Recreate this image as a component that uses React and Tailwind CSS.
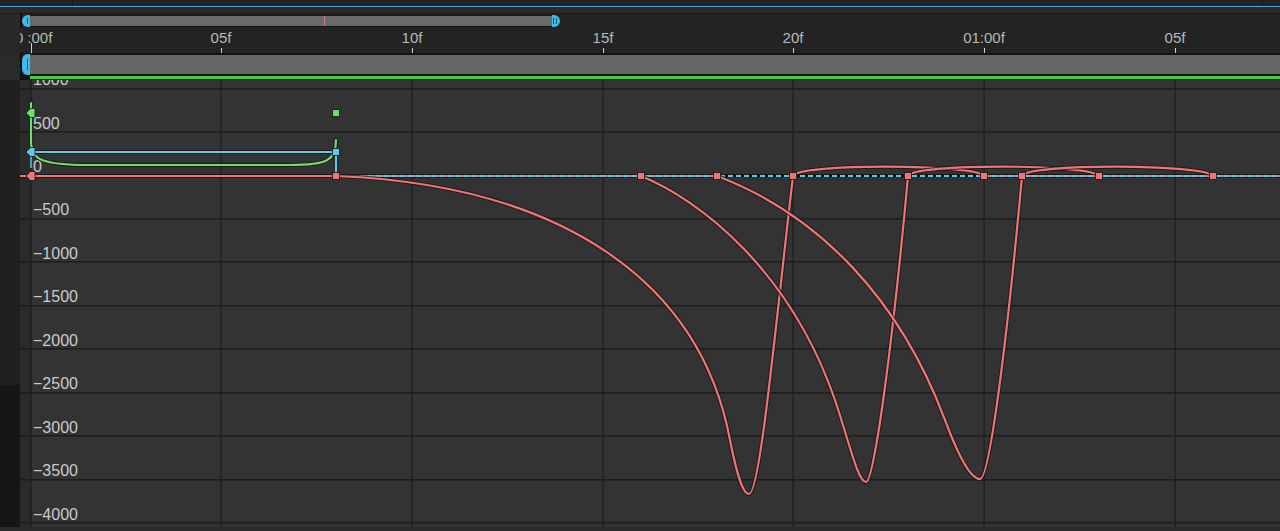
import React from 'react';

const RED = '#f07474';
const GREEN = '#6fdc6f';
const CYAN = '#62c8e6';
const OUTLINE = '#161616';

const ruler = [
  ['05f', 221],
  ['10f', 412],
  ['15f', 603],
  ['20f', 793],
  ['01:00f', 984],
  ['05f', 1175],
];

const values = ['1000', '500', '0', '−500', '−1000', '−1500', '−2000', '−2500', '−3000', '−3500', '−4000'];
const gridX = [31, 221, 412, 603, 793, 984, 1175];
const redKeys = [336, 641, 717, 793, 908, 984, 1022, 1099, 1213];

const redCurves = [
  'M336,176 C560,185 700,280 730,440 C736,470 742,494 749,494 C760,494 775,330 793,176',
  'M641,176 C700,200 790,270 835,400 C850,445 858,482 866,482 C875,482 895,320 908,176',
  'M717,176 C820,215 900,300 945,420 C958,455 970,479 980,479 C990,479 1008,330 1022,176',
  'M793,176 C797,163 978,164 984,176',
  'M908,176 C912,163 1093,164 1099,176',
  'M1022,176 C1026,163 1207,164 1213,176',
];

// curve with the dark outline the graph editor draws under it
const Curve = ({ d, color, w = 2.2, dash }) => (
  <g fill="none" strokeLinecap="round" strokeLinejoin="round">
    <path d={d} stroke={OUTLINE} strokeWidth={w + 2} strokeOpacity="0.8" />
    <path d={d} stroke={color} strokeWidth={w} strokeDasharray={dash} />
  </g>
);

const Square = ({ x, y, color }) => (
  <rect x={x - 3.5} y={y - 3.5} width="7" height="7" fill={color} stroke={OUTLINE} strokeWidth="0.8" />
);

const FirstKey = ({ y, color }) => (
  <polygon
    points={`26,${y} 30.5,${y - 4.5} 35,${y - 4.5} 35,${y + 4.5} 30.5,${y + 4.5}`}
    fill={color}
    stroke={OUTLINE}
    strokeWidth="0.8"
  />
);

const Handle = ({ side, h }) => (
  <div
    className={`w-[8px] ${h} bg-[#3fb9ea] flex items-center justify-center gap-[2px] ${
      side === 'left' ? 'rounded-l-[6px] pl-[2px]' : 'rounded-r-[6px] pr-[2px]'
    }`}
  >
    <div className="w-px h-[55%] bg-[#155a78]" />
    {side === 'right' && <div className="w-px h-[55%] bg-[#155a78]" />}
  </div>
);

const App = () => {
  return (
    <div className="w-[1280px] h-[531px] bg-[#262626] flex flex-col overflow-hidden font-['Liberation_Sans',Arial,sans-serif]">
      {/* panel header strip */}
      <div className="h-[6px] flex bg-[#232323]">
        <div className="w-[73px] border-r border-[#181818]" />
        <div className="flex-1 border-r border-[#181818]" />
        <div className="w-[17px]" />
      </div>
      <div className="h-px bg-[#4aa8dc]" />
      <div className="h-[7px] bg-[#2a2a2a] border-b border-[#1c1c1c]" />

      {/* navigator */}
      <div className="h-[14px] flex items-center bg-[#232323]">
        <div className="w-[20px] h-full bg-[#292929]" />
        <div className="w-[2px] h-full bg-[#111]" />
        <Handle side="left" h="h-[12px]" />
        <div className="w-[522px] h-[12px] bg-[#6a6a6a] border-y border-[#141414] relative">
          <div className="absolute left-[294px] top-0 bottom-0 w-px bg-[#c98080]" />
          <div className="absolute left-[295px] top-0 bottom-0 w-px bg-[#e23a3a]" />
        </div>
        <Handle side="right" h="h-[12px]" />
      </div>

      {/* time ruler */}
      <div className="h-[26px] flex">
        <div className="w-[20px] bg-[#282828]" />
        <svg width="1260" height="26" viewBox="20 28 1260 26" className="block">
          <rect x="20" y="28" width="1260" height="26" fill="#232323" />
          <rect x="20" y="53" width="1260" height="1" fill="#111" />
          <text x="15" y="43" fill="#b9b9b9" fontSize="15">
            <tspan>0</tspan>
            <tspan dx="4">:00f</tspan>
          </text>
          <rect x="31" y="43" width="1" height="10" fill="#d0d0d0" />
          {ruler.map(([label, x], i) => (
            <g key={i}>
              <text x={x} y="43" fill="#b9b9b9" fontSize="15" textAnchor="middle">
                {label}
              </text>
              <rect x={x} y="48" width="1" height="5" fill="#d0d0d0" />
            </g>
          ))}
        </svg>
      </div>

      {/* work area bar */}
      <div className="h-[21px] flex">
        <div className="w-[20px] bg-[#2a2a2a]" />
        <div className="w-[2px] bg-[#111]" />
        <Handle side="left" h="h-full" />
        <div className="flex-1 bg-[#666] border-y border-[#151515]" />
      </div>
      <div className="h-[5px] flex">
        <div className="w-[20px] bg-[#2a2a2a]" />
        <div className="flex-1 bg-[#141414] py-px pl-[10px]">
          <div className="h-[3px] bg-[#3fcf3f]" />
        </div>
      </div>

      {/* graph */}
      <div className="h-[447px] flex">
        <div className="w-[20px] flex flex-col">
          <div className="h-[305px] bg-[#202020]" />
          <div className="flex-1 bg-[#161616]" />
        </div>
        <svg width="1260" height="447" viewBox="20 80 1260 447" className="block">
          <rect x="20" y="80" width="11" height="447" fill="#2b2b2b" />
          <rect x="31" y="80" width="1249" height="447" fill="#333333" />

          {values.map((v, k) => {
            const y = 87.55 + 43.45 * k;
            return (
              <g key={v}>
                <rect x="20" y={Math.round(y)} width="1260" height="1.5" fill="#1d1d1d" />
                <text x="33" y={y - 2.5} fill="#cbcbcb" fontSize="16">
                  {v}
                </text>
              </g>
            );
          })}
          {gridX.map((x) => (
            <rect key={x} x={x - 0.5} y="80" width="1.2" height="447" fill="#1d1d1d" />
          ))}

          {/* flat value lines */}
          <path d="M20,176 H717" stroke={OUTLINE} strokeWidth="4" strokeOpacity="0.7" />
          <path d="M984,176 H1280" stroke={OUTLINE} strokeWidth="4" strokeOpacity="0.7" />
          <path d="M20,176 H717" stroke={RED} strokeWidth="2" />
          <path d="M717,176 H984" stroke="#111" strokeWidth="2.5" />
          <path d="M984,176 H1280" stroke={RED} strokeWidth="2" />
          <path d="M336,176 H1280" stroke={CYAN} strokeWidth="2" strokeDasharray="5 3" />

          {/* green property */}
          <Curve d="M31,103 L31,140 C31,158 38,164 80,165 L290,165 C328,165 336,160 336,140" color={GREEN} />

          {/* cyan property */}
          <Curve d="M31,152 H336 V176" color={CYAN} />
          <path d="M31,152 V168" stroke={CYAN} strokeWidth="1.5" />

          {/* red property */}
          {redCurves.map((d, i) => (
            <Curve key={i} d={d} color={RED} />
          ))}

          {redKeys.map((x) => (
            <Square key={x} x={x} y={176} color={RED} />
          ))}
          <Square x={336} y={152} color={CYAN} />
          <Square x={336} y={113} color={GREEN} />
          <FirstKey y={113} color={GREEN} />
          <FirstKey y={152} color={CYAN} />
          <FirstKey y={176} color={RED} />
        </svg>
      </div>
      <div className="h-[4px] bg-[#2a2a2a]" />
    </div>
  );
};

export default App;
